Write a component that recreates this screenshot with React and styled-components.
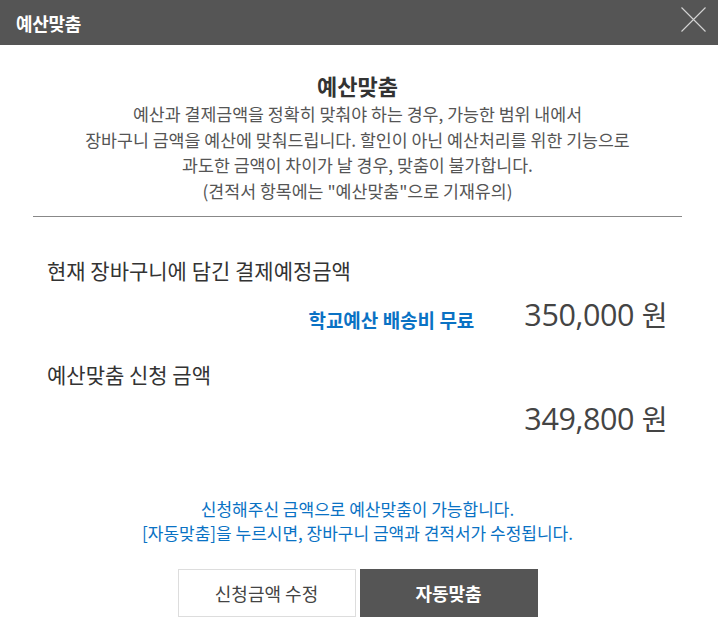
import React from 'react';
import styled, { createGlobalStyle } from "styled-components";

const GlobalStyle = createGlobalStyle`
    html, body {
        margin: 0;
        padding: 0;
        background: #fff;
        font-family: "Noto Sans CJK KR", "Noto Sans", sans-serif;
    }
`

const BLUE = "#0a72c4";

const App = () => {
    return (
        <Modal>
            <GlobalStyle />
            <Header>
                <h1>예산맞춤</h1>
                <CloseButton aria-label="닫기">
                    <svg width="25" height="25" viewBox="0 0 25 25">
                        <path d="M0.5 0.5 L24.5 24.5 M24.5 0.5 L0.5 24.5" stroke="#d4d4d4" strokeWidth="1.1" fill="none" />
                    </svg>
                </CloseButton>
            </Header>

            <Body>
                <Intro>
                    <h2>예산맞춤</h2>
                    <p>
                        예산과 결제금액을 정확히 맞춰야 하는 경우, 가능한 범위 내에서<br />
                        장바구니 금액을 예산에 맞춰드립니다. 할인이 아닌 예산처리를 위한 기능으로<br />
                        과도한 금액이 차이가 날 경우, 맞춤이 불가합니다.<br />
                        (견적서 항목에는 "예산맞춤"으로 기재유의)
                    </p>
                </Intro>

                <Section>
                    <Label>현재 장바구니에 담긴 결제예정금액</Label>
                    <AmountRow>
                        <Note>학교예산 배송비 무료</Note>
                        <Amount>350,000 <span>원</span></Amount>
                    </AmountRow>
                    <Label>예산맞춤 신청 금액</Label>
                    <AmountRow>
                        <Amount>349,800 <span>원</span></Amount>
                    </AmountRow>
                </Section>

                {/* 안내 문구 + 버튼 */}
                <Notice>
                    신청해주신 금액으로 예산맞춤이 가능합니다.<br />
                    [자동맞춤]을 누르시면, 장바구니 금액과 견적서가 수정됩니다.
                </Notice>

                <Buttons>
                    <Button>신청금액 수정</Button>
                    <Button $primary>자동맞춤</Button>
                </Buttons>
            </Body>
        </Modal>
    )
}

const Modal = styled.div`
    width: 718px;
    height: 642px;
    background: #fff;
    color: #444;
`

const Header = styled.header`
    height: 45px;
    background: #555;
    display: flex;
    align-items: center;
    justify-content: space-between;
    padding: 0 12px 0 16px;
    box-sizing: border-box;
    h1{
        margin: 0;
        font-size: 18px;
        line-height: 24px;
        font-weight: 700;
        color: #fff;
        letter-spacing: -0.3px;
    }
`

const CloseButton = styled.button`
    border: none;
    background: none;
    padding: 0;
    width: 25px;
    height: 25px;
    display: flex;
    margin-top: -6px;
    cursor: pointer;
`

const Body = styled.div`
    padding: 0 36px 0 33px;
`

const Intro = styled.section`
    text-align: center;
    border-bottom: 1px solid #888;
    padding: 26px 0 12px;
    h2{
        margin: 0 0 2px;
        font-size: 22px;
        line-height: 28px;
        font-weight: 700;
        color: #333;
    }
    p{
        margin: 0;
        font-size: 17.3px;
        line-height: 25.7px;
        color: #555;
    }
`

const Section = styled.section`
    padding: 37px 15px 0 14px;
`

const Label = styled.h3`
    margin: 0;
    font-size: 21px;
    line-height: 32px;
    font-weight: 400;
    color: #333;
`

const AmountRow = styled.div`
    display: flex;
    justify-content: flex-end;
    align-items: center;
    gap: 50px;
    height: 44px;
    margin: 6px 0 22px;
`

const Note = styled.span`
    font-size: 19px;
    font-weight: 700;
    color: ${BLUE};
    position: relative;
    top: 6px;
`

const Amount = styled.strong`
    font-family: "Open Sans", "Noto Sans", sans-serif;
    font-size: 30.5px;
    font-weight: 400;
    color: #444;
    letter-spacing: -0.4px;
    span{
        font-family: "Noto Sans CJK KR", sans-serif;
        font-size: 28px;
    }
`

const Notice = styled.p`
    margin: 57px 0 0;
    text-align: center;
    font-size: 17px;
    line-height: 24px;
    color: ${BLUE};
`

const Buttons = styled.div`
    display: flex;
    justify-content: center;
    gap: 4px;
    margin-top: 24px;
`

const Button = styled.button`
    width: 178px;
    height: 48px;
    box-sizing: border-box;
    border: 1px solid ${p => p.$primary ? "#555" : "#ddd"};
    background: ${p => p.$primary ? "#555" : "#fff"};
    color: ${p => p.$primary ? "#fff" : "#444"};
    font-family: "Noto Sans CJK KR", sans-serif;
    font-size: 18px;
    font-weight: ${p => p.$primary ? 700 : 400};
    cursor: pointer;
`

export default App
